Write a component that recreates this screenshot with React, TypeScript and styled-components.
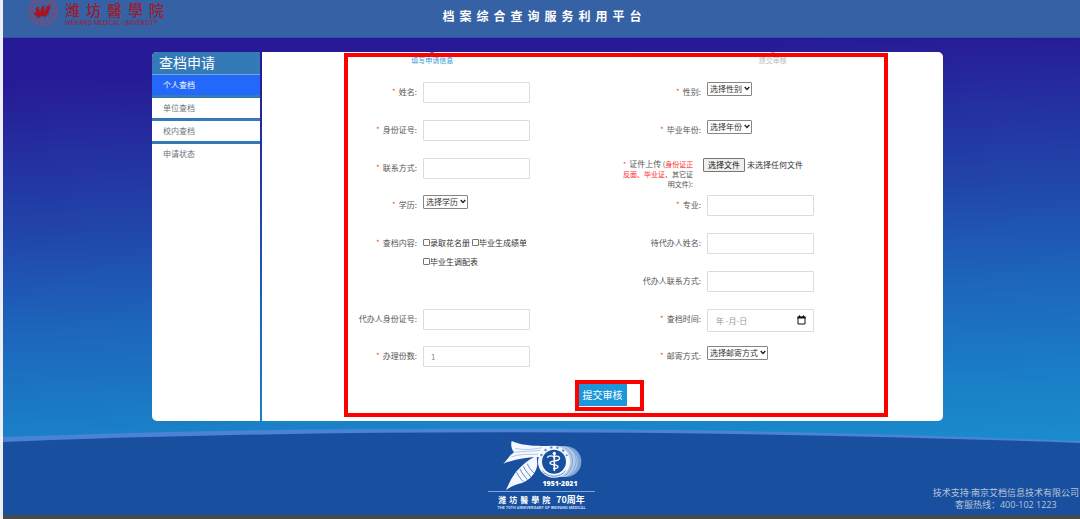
import React from 'react';
import styled, { createGlobalStyle, css } from 'styled-components';

const GlobalStyle = createGlobalStyle`
  *, *::before, *::after { box-sizing: border-box; }
  body {
    margin: 0;
    background: #eeeef4;
    font-family: "Noto Sans CJK SC", sans-serif;
    font-size: 8px;
    color: #555;
  }
  button, input, select { font: inherit; color: inherit; margin: 0; }
`;

const Page = styled.div`
  display: flex;
  flex-direction: column;
  min-height: 100vh;
  margin-left: 3px;
  background: linear-gradient(177deg, #271a96 14%, #2144aa 40%, #1d66bc 58%, #1a80c7 76%, #198ccd 86%);
`;

const Header = styled.header`
  display: grid;
  grid-template-columns: 1fr auto 1fr;
  height: 38px;
  padding: 0 25px;
  background: #3562a5;
  border-bottom: 1px solid #2f509f;
`;

const Brand = styled.a`
  display: flex;
  gap: 6px;
  color: #9c1c2e;
  text-decoration: none;
`;

const BrandText = styled.span`
  display: flex;
  flex-direction: column;
  white-space: nowrap;
`;

const BrandName = styled.span`
  font-size: 15px;
  font-weight: 500;
  line-height: 20px;
  letter-spacing: 6px;
`;

const BrandLatin = styled.span`
  font-family: Inter, sans-serif;
  font-size: 6px;
  line-height: 6px;
`;

const SiteTitle = styled.h1`
  margin: 0;
  padding: 6px 0 0 6px;
  color: #fff;
  font-size: 12px;
  font-weight: 700;
  line-height: 20px;
  letter-spacing: 5px;
`;

const Main = styled.main`
  flex: 1;
  display: flex;
  gap: 2px;
  padding: 14px 137px 6px 149px;
`;

const Sidebar = styled.nav`
  width: 108px;
  background: #fff;
  border-radius: 5px 0 0 5px;
  overflow: hidden;
`;

const SidebarTitle = styled.h2`
  margin: 0;
  padding-left: 7px;
  height: 23px;
  background: #337ab7;
  border-bottom: 1px solid #6fa5d6;
  color: #fff;
  font-size: 14px;
  font-weight: 400;
  line-height: 20px;
`;

const Menu = styled.ul`
  margin: 0;
  padding: 0;
  list-style: none;
`;

const MenuItem = styled.li`
  &:not(:last-child) { border-bottom: 3px solid #337ab7; }
`;

const MenuLink = styled.a<{ $active?: boolean }>`
  display: block;
  padding-left: 11px;
  line-height: 20px;
  text-decoration: none;
  color: ${p => (p.$active ? '#fff' : '#6b7480')};
  background: ${p => (p.$active ? '#2268fb' : '#fff')};
`;

const Content = styled.section`
  position: relative;
  flex: 1;
  padding-bottom: 15px;
  background: #fff;
  border-radius: 0 5px 5px 0;
`;

const Steps = styled.ol`
  display: grid;
  grid-template-columns: 1fr 1fr;
  height: 30px;
  margin: 0;
  padding: 0;
  list-style: none;
  overflow: hidden;
`;

const Step = styled.li<{ $active?: boolean }>`
  font-size: 7px;
  line-height: 14px;
  text-align: center;
  color: ${p => (p.$active ? '#2f9ad8' : '#b4bcc0')};
  &::before {
    content: "";
    display: block;
    width: 4px;
    height: 1px;
    margin: 0 auto;
    background: currentColor;
  }
`;

const Fields = styled.div`
  display: grid;
  grid-template-columns: 1fr 1fr;
  grid-auto-rows: 1fr;
  min-height: 302px;
  padding: 0 36px 0 77px;
`;

const Field = styled.div<{ $rows?: number }>`
  display: flex;
  gap: 6px;
  grid-row: span ${p => p.$rows ?? 1};
`;

const labelBox = css`
  flex: none;
  width: 78px;
  line-height: 20px;
  text-align: right;
  white-space: nowrap;
`;

const Label = styled.label`${labelBox}`;
const GroupLabel = styled.span`${labelBox}`;

const FileLabel = styled.label`
  flex: none;
  width: 70px;
  padding-top: 1px;
  font-size: 7px;
  line-height: 10px;
  text-align: right;
  white-space: nowrap;
`;

const FileName = styled.span`font-size: 8px;`;

const Red = styled.span`color: #ff2a2a;`;

const Star = styled.span`
  margin-right: 3px;
  color: #ff4a3a;
`;

const TextInput = styled.input`
  width: 107px;
  height: 21px;
  padding: 0 7px;
  border: 1px solid #dcdcdc;
  border-radius: 1px;
  background: #fff;
  color: #888;
  outline-color: #1c98da;
`;

const SelectWrap = styled.span`
  position: relative;
  align-self: flex-start;
  display: flex;
  svg {
    position: absolute;
    right: 2px;
    top: 4px;
    pointer-events: none;
  }
`;

const Select = styled.select`
  appearance: none;
  height: 14px;
  padding: 0 9px 0 2px;
  border: 1px solid #858585;
  border-radius: 1px;
  background: #fff;
  color: #333;
  line-height: 12px;
`;

const Checks = styled.div`
  display: flex;
  flex-wrap: wrap;
  align-content: flex-start;
  column-gap: 2px;
  width: 120px;
`;

const Check = styled.label`
  display: flex;
  align-items: center;
  height: 19px;
  color: #333;
  white-space: nowrap;
`;

const CheckBox = styled.input`
  appearance: none;
  width: 7px;
  height: 7px;
  border: 1px solid #767676;
  border-radius: 1px;
  &:checked { background: #1c98da; }
`;

const FilePicker = styled.span`
  display: flex;
  align-items: center;
  align-self: flex-start;
  gap: 2px;
  margin-left: 4px;
  color: #333;
  white-space: nowrap;
`;

const FileInput = styled.input`
  position: absolute;
  width: 1px;
  height: 1px;
  opacity: 0;
`;

const FileButton = styled.button`
  height: 14px;
  padding: 0 4px;
  border: 1px solid #767676;
  border-radius: 1px;
  background: #efefef;
  color: #111;
  line-height: 12px;
`;

const DateWrap = styled.span`
  position: relative;
  align-self: flex-start;
  display: flex;
  svg { position: absolute; right: 8px; top: 6px; }
`;

const DateInput = styled(TextInput)`
  height: 23px;
  padding: 0 8px;
  &::placeholder { color: #999; }
`;

const Actions = styled.div`
  display: flex;
  justify-content: center;
`;

const SubmitArea = styled.div`position: relative;`;

const Submit = styled.button`
  display: block;
  width: 48px;
  height: 22px;
  padding: 0;
  border: 0;
  background: #1c98da;
  color: #fff;
  font-size: 10px;
  line-height: 22px;
`;

const Marker = styled.div`
  position: absolute;
  border: 4px solid #ff0000;
  pointer-events: none;
`;

const FormMarker = styled(Marker)`inset: 1px 55px 4px 82px;`;
const SubmitMarker = styled(Marker)`inset: -4px -17px -5px -4px;`;

const Footer = styled.footer`
  position: relative;
  display: grid;
  grid-template-columns: 1fr auto 1fr;
  height: 88px;
  color: #fff;
`;

const Curve = styled.svg`
  position: absolute;
  inset: 0;
  width: 100%;
  height: 100%;
`;

const Anniversary = styled.div`
  position: relative;
  grid-column: 2;
  display: flex;
  flex-direction: column;
  align-items: center;
  width: 107px;
  padding-top: 12px;
`;

const Emblem = styled.div`
  position: relative;
  width: 84px;
  height: 52px;
`;

const Years = styled.span`
  position: absolute;
  right: 6px;
  bottom: 3px;
  font-family: "Open Sans", sans-serif;
  font-size: 7px;
  font-weight: 800;
  line-height: 8px;
`;

const AnniversaryName = styled.div`
  display: flex;
  align-items: center;
  justify-content: center;
  gap: 3px;
  width: 100%;
  height: 15px;
  border-top: 1px solid #7ea6dc;
  font-size: 9px;
  font-weight: 700;
  white-space: nowrap;
`;

const BrushName = styled.span`
  font-size: 8px;
  letter-spacing: 3px;
`;

const AnniversaryLatin = styled.span`
  font-family: Roboto, sans-serif;
  font-size: 4px;
  font-weight: 700;
  line-height: 4px;
  color: #c7d8f0;
  white-space: nowrap;
`;

const Support = styled.address`
  position: relative;
  justify-self: end;
  align-self: end;
  padding: 0 1px 4px 0;
  color: #b9c4d8;
  font-family: "Open Sans", "Noto Sans CJK SC", sans-serif;
  font-size: 9px;
  font-style: normal;
  line-height: 12px;
  text-align: center;
  white-space: nowrap;
`;

const BottomBar = styled.div`
  height: 4px;
  background: #4a4a4c;
`;

const Seal = () => (
  <svg width="31" height="27" viewBox="0 0 31 27" aria-hidden="true">
    <g fill="none" stroke="#8a4a6c">
      <circle cx="15" cy="11" r="14" strokeWidth="1.2" />
      <circle cx="15" cy="11" r="11.5" strokeWidth="2.4" strokeDasharray="1.6 1.1" opacity=".75" />
      <circle cx="15" cy="11" r="9" strokeWidth=".8" />
    </g>
    <path
      d="M7.500 8l3-1.500 1.500 6 1.500-5.500 3-1.500 0 7 2-6 3.500-2-.5 2.500 2 .5-2.500 2.500-.5 4-3.500 3-3-1-4 2-3-3-2-2 3-.5z"
      fill="#a81420"
    />
  </svg>
);

const Chevron = () => (
  <svg width="6" height="5" viewBox="0 0 6 5" aria-hidden="true">
    <path d="M.7 1.1L3 3.5 5.3 1.1" fill="none" stroke="#222" strokeWidth="1.4" />
  </svg>
);

const CalendarIcon = () => (
  <svg width="9" height="10" viewBox="0 0 9 10" aria-hidden="true">
    <path d="M1 2h7v7H1z" fill="none" stroke="#111" strokeWidth="1" />
    <path d="M.5 1.5h8v2h-8zM2 .3h1v2H2zM6 .3h1v2H6z" fill="#111" />
  </svg>
);

const SeventyLogo = () => (
  <svg width="84" height="52" viewBox="180 24 252 156" aria-hidden="true">
    <path d="M340 46h38a45 45 0 0 1 0 92h-38z" fill="#7fa3d6" />
    <path d="M345 46h22a45 45 0 0 1 0 92h-22z" fill="#b3cbe9" />
    <g fill="none" stroke="#4f7dc0" strokeWidth="1.5">
      <path d="M362 50c28 10 36 58 2 84M374 50c28 12 34 56 2 84M386 50c28 14 32 56 0 84" />
    </g>
    <path
      d="M215 30C245 44 285 46 336 44L300 78C262 78 225 84 190 98 202 86 208 74 222 64 214 54 212 42 215 30z"
      fill="#f5f9ff"
    />
    <path
      d="M290 74C262 86 236 112 224 128 214 142 206 158 198 178 212 166 228 160 246 156 272 146 290 124 292 100z"
      fill="#f5f9ff"
    />
    <g fill="none" stroke="#8db0de" strokeWidth="2">
      <path d="M226 52c28 6 50 4 80-2M224 64c28-4 50-2 76-6M214 78c28-10 50-8 80-8" />
    </g>
    <g fill="none" stroke="#184f9f" strokeWidth="2">
      <path d="M250 106c6 14 18 24 22 32M240 114c6 14 16 24 22 32M230 124c6 12 12 20 20 28M262 98c4 12 12 20 20 28" />
    </g>
    <circle cx="342" cy="92" r="48" fill="#f5f9ff" />
    <circle cx="342" cy="92" r="36" fill="#184f9f" />
    <path d="M307 119a45 45 0 0 0 70 0" fill="none" stroke="#184f9f" strokeWidth="2" />
    <path d="M303 75a42 42 0 0 1 78 0" fill="none" stroke="#5f8ccb" strokeWidth="6" strokeDasharray="7 12" />
    <path d="M343 66v54" stroke="#fff" strokeWidth="5" />
    <circle cx="343" cy="67" r="5" fill="#fff" />
    <path
      d="M322 80c4-8 18-6 20-1 6-7 20-3 16 5-3 8-28 3-28 12 0 8 24 3 24 11 0 6-12 6-15 5"
      fill="none" stroke="#fff" strokeWidth="4"
    />
  </svg>
);

type RowProps = { id: string; label: string; required?: boolean };

const FieldLabel = ({ id, label, required }: RowProps) => (
  <Label htmlFor={id}>
    {required && <Star>*</Star>}
    {label}:
  </Label>
);

const TextField = ({ value, ...row }: RowProps & { value?: string }) => (
  <Field>
    <FieldLabel {...row} />
    <TextInput id={row.id} type="text" defaultValue={value} />
  </Field>
);

const SelectField = ({ option, ...row }: RowProps & { option: string }) => (
  <Field>
    <FieldLabel {...row} />
    <SelectWrap>
      <Select id={row.id}>
        <option>{option}</option>
      </Select>
      <Chevron />
    </SelectWrap>
  </Field>
);

const menu = ['个人查档', '单位查档', '校内查档', '申请状态'];
const archives = ['录取花名册', '毕业生成绩单', '毕业生调配表'];

export default function App() {
  const fileRef = React.useRef<HTMLInputElement>(null);

  return (
    <>
      <GlobalStyle />
      <Page>
        <Header>
          <Brand href="#">
            <Seal />
            <BrandText>
              <BrandName>潍坊醫學院</BrandName>
              <BrandLatin>WEIFANG MEDICAL UNIVERSITY</BrandLatin>
            </BrandText>
          </Brand>
          <SiteTitle>档案综合查询服务利用平台</SiteTitle>
        </Header>

        <Main>
          <Sidebar>
            <SidebarTitle>查档申请</SidebarTitle>
            <Menu>
              {menu.map((item, i) => (
                <MenuItem key={item}>
                  <MenuLink href="#" $active={i === 0}>{item}</MenuLink>
                </MenuItem>
              ))}
            </Menu>
          </Sidebar>

          <Content>
            <Steps>
              <Step $active>填写申请信息</Step>
              <Step>提交审核</Step>
            </Steps>
            <form onSubmit={e => e.preventDefault()}>
              <Fields>
                <TextField id="name" label="姓名" required />
                <SelectField id="gender" label="性别" required option="选择性别" />
                <TextField id="idno" label="身份证号" required />
                <SelectField id="year" label="毕业年份" required option="选择年份" />
                <TextField id="phone" label="联系方式" required />
                <Field>
                  <FileLabel htmlFor="papers">
                    <Star>*</Star>
                    <FileName>证件上传</FileName> (<Red>身份证正<br />反面、毕业证</Red>、其它证<br />明文件):
                  </FileLabel>
                  <FilePicker>
                    <FileInput ref={fileRef} id="papers" type="file" tabIndex={-1} />
                    <FileButton type="button" onClick={() => fileRef.current?.click()}>
                      选择文件
                    </FileButton>
                    未选择任何文件
                  </FilePicker>
                </Field>
                <SelectField id="degree" label="学历" required option="选择学历" />
                <TextField id="major" label="专业" required />
                <Field $rows={2} role="group" aria-labelledby="archives">
                  <GroupLabel id="archives"><Star>*</Star>查档内容:</GroupLabel>
                  <Checks>
                    {archives.map(item => (
                      <Check key={item}>
                        <CheckBox type="checkbox" />
                        {item}
                      </Check>
                    ))}
                  </Checks>
                </Field>
                <TextField id="agent" label="待代办人姓名" />
                <TextField id="agentPhone" label="代办人联系方式" />
                <TextField id="agentId" label="代办人身份证号" />
                <Field>
                  <FieldLabel id="date" label="查档时间" required />
                  <DateWrap>
                    <DateInput id="date" type="text" placeholder="年 -月-日" />
                    <CalendarIcon />
                  </DateWrap>
                </Field>
                <TextField id="copies" label="办理份数" required value="1" />
                <SelectField id="post" label="邮寄方式" required option="选择邮寄方式" />
              </Fields>
              <Actions>
                <SubmitArea>
                  <Submit type="submit">提交审核</Submit>
                  <SubmitMarker />
                </SubmitArea>
              </Actions>
            </form>
            <FormMarker />
          </Content>
        </Main>

        <Footer>
          <Curve viewBox="0 0 1077 88" preserveAspectRatio="none" aria-hidden="true">
            <path d="M0 10Q500 -9 1077 14V88H0z" fill="#4a82d6" />
            <path d="M0 15Q500 -5 1077 16V88H0z" fill="#184f9f" />
          </Curve>
          <Anniversary>
            <Emblem>
              <SeventyLogo />
              <Years>1951-2021</Years>
            </Emblem>
            <AnniversaryName>
              <BrushName>潍坊醫學院</BrushName>70周年
            </AnniversaryName>
            <AnniversaryLatin>THE 70TH ANNIVERSARY OF WEIFANG MEDICAL</AnniversaryLatin>
          </Anniversary>
          <Support>
            技术支持·南京艾档信息技术有限公司
            <br />
            客服热线：400-102 1223
          </Support>
        </Footer>
        <BottomBar />
      </Page>
    </>
  );
}
